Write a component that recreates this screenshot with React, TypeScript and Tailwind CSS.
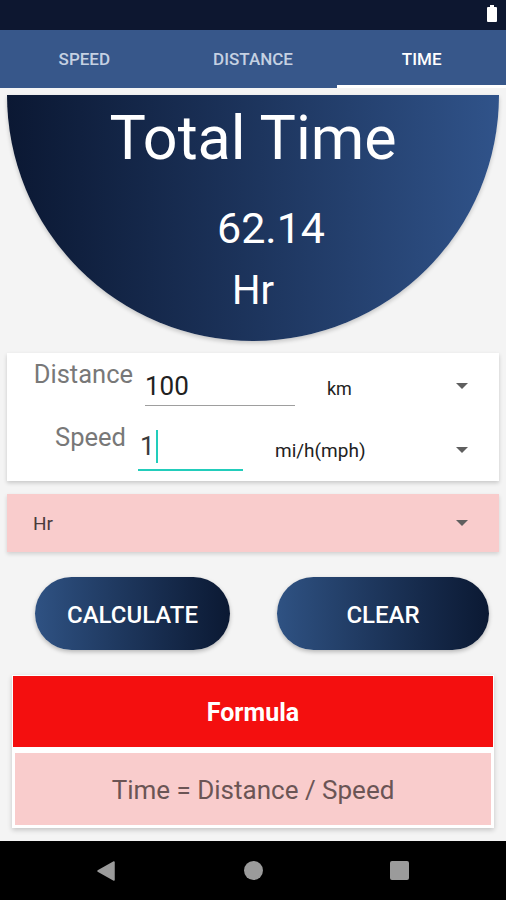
import { ReactNode } from 'react'

const font = { fontFamily: 'Roboto, "Noto Sans", sans-serif' }

function Caret() {
	return (
		<svg width="12" height="6" viewBox="0 0 12 6" className="block">
			<path d="M0 0 L12 0 L6 6 Z" fill="#5f5f5f" />
		</svg>
	)
}

function PillButton({ children, width }: { children: ReactNode; width: string }) {
	return (
		<button
			className={`${width} h-[73px] pt-[3px] rounded-full bg-gradient-to-r from-[#2f5283] to-[#0b1933] text-white text-[24px] font-medium shadow-[0_2px_4px_rgba(0,0,0,0.25)]`}
		>
			{children}
		</button>
	)
}

export default function App() {
	return (
		<div className="w-[506px] h-[900px] bg-[#f4f4f4] flex flex-col overflow-hidden" style={font}>
			{/* status bar */}
			<div className="h-[30px] bg-[#0d1730] flex justify-end items-start pr-[9px] pt-[5px]">
				<div className="flex flex-col items-center">
					<div className="w-[4px] h-[2px] bg-white" />
					<div className="w-[10px] h-[15px] bg-white rounded-[1px]" />
				</div>
			</div>

			{/* tabs */}
			<div className="h-[58px] bg-[#37578a] flex">
				{['SPEED', 'DISTANCE', 'TIME'].map((t) => (
					<div key={t} className="flex-1 flex flex-col">
						<div
							className={`flex-1 flex items-center justify-center text-[17px] font-medium pt-[5px] ${
								t === 'TIME' ? 'text-white' : 'text-[#c5d1e2]'
							}`}
						>
							{t}
						</div>
						<div className={`h-[3px] ${t === 'TIME' ? 'bg-white' : ''}`} />
					</div>
				))}
			</div>

			{/* result half circle */}
			<div className="px-[7px] pt-[7px]">
				<div className="w-[492px] h-[246px] rounded-b-[246px] bg-gradient-to-r from-[#0b1833] to-[#30538a] shadow-[0_2px_4px_rgba(0,0,0,0.2)] flex flex-col items-center text-white pt-[12px]">
					<div className="text-[61px] leading-[62px]">Total Time</div>
					<div className="text-[43px] leading-[42px] mt-[38px] ml-[36px]">62.14</div>
					<div className="text-[40px] leading-[38px] mt-[23px]">Hr</div>
				</div>
			</div>

			{/* inputs card */}
			<div className="mx-[7px] mt-[12px] h-[128px] bg-white shadow-[0_2px_4px_rgba(0,0,0,0.18)] flex flex-col">
				<div className="h-[64px] flex items-start">
					<div className="w-[126px] text-right text-[25.5px] leading-[28px] mt-[7px] text-[#787878]">Distance</div>
					<div className="ml-[12px] w-[150px] h-[35px] mt-[18px] border-b border-[#9e9e9e] text-[26px] leading-[30px] text-[#212121]">
						100
					</div>
					<div className="ml-[32px] mt-[26px] text-[18px] leading-[20px] text-[#222]">km</div>
					<div className="flex-1" />
					<div className="mt-[30px] mr-[31px]">
						<Caret />
					</div>
				</div>
				<div className="h-[64px] flex items-start">
					<div className="w-[119px] text-right text-[25.5px] leading-[28px] mt-[6px] text-[#787878]">Speed</div>
					<div className="ml-[12px] w-[105px] h-[40px] mt-[14px] border-b-2 border-[#22cdbb] flex items-start">
						<span className="ml-[2px] text-[26px] leading-[30px] text-[#3a3a3a]">1</span>
						<span className="w-[2px] h-[33px] bg-[#22cdbb] -mt-[1px] ml-[1px]" />
					</div>
					<div className="ml-[32px] mt-[24px] text-[19px] leading-[20px] text-[#222]">mi/h(mph)</div>
					<div className="flex-1" />
					<div className="mt-[30px] mr-[31px]">
						<Caret />
					</div>
				</div>
			</div>

			{/* unit select */}
			<div className="mx-[7px] mt-[13px] h-[58px] bg-[#f9cccc] shadow-[0_2px_4px_rgba(0,0,0,0.15)] flex items-center pl-[26px] pr-[31px]">
				<div className="flex-1 text-[19px] text-[#4b3b3b] pt-[2px]">Hr</div>
				<Caret />
			</div>

			{/* buttons */}
			<div className="mt-[25px] h-[73px] flex pl-[35px] gap-[47px]">
				<PillButton width="w-[195px]">CALCULATE</PillButton>
				<PillButton width="w-[212px]">CLEAR</PillButton>
			</div>

			{/* formula */}
			<div className="mx-[12px] mt-[25px] h-[153px] bg-white shadow-[0_2px_5px_rgba(0,0,0,0.2)] p-[1px] flex flex-col">
				<div className="h-[71px] pt-[3px] bg-[#f40f0f] flex items-center justify-center text-white text-[25px] font-bold">
					Formula
				</div>
				<div className="mt-[6px] mx-[2px] h-[72px] pt-[2px] bg-[#f9cccc] flex items-center justify-center text-[26px] text-[#6b5555]">
					Time = Distance / Speed
				</div>
			</div>

			<div className="flex-1" />

			{/* nav bar */}
			<div className="h-[59px] bg-black flex items-center">
				<div className="w-[506px] flex items-center">
					<div className="ml-[97px]">
						<svg width="18" height="20" viewBox="0 0 18 20">
							<path d="M17 1 L17 19 L1 10 Z" fill="#9b9b9b" stroke="#9b9b9b" strokeLinejoin="round" strokeWidth="1.5" />
						</svg>
					</div>
					<div className="ml-[129px] w-[19px] h-[19px] rounded-full bg-[#9b9b9b]" />
					<div className="ml-[127px] w-[19px] h-[19px] rounded-[2px] bg-[#9b9b9b]" />
				</div>
			</div>
		</div>
	)
}
